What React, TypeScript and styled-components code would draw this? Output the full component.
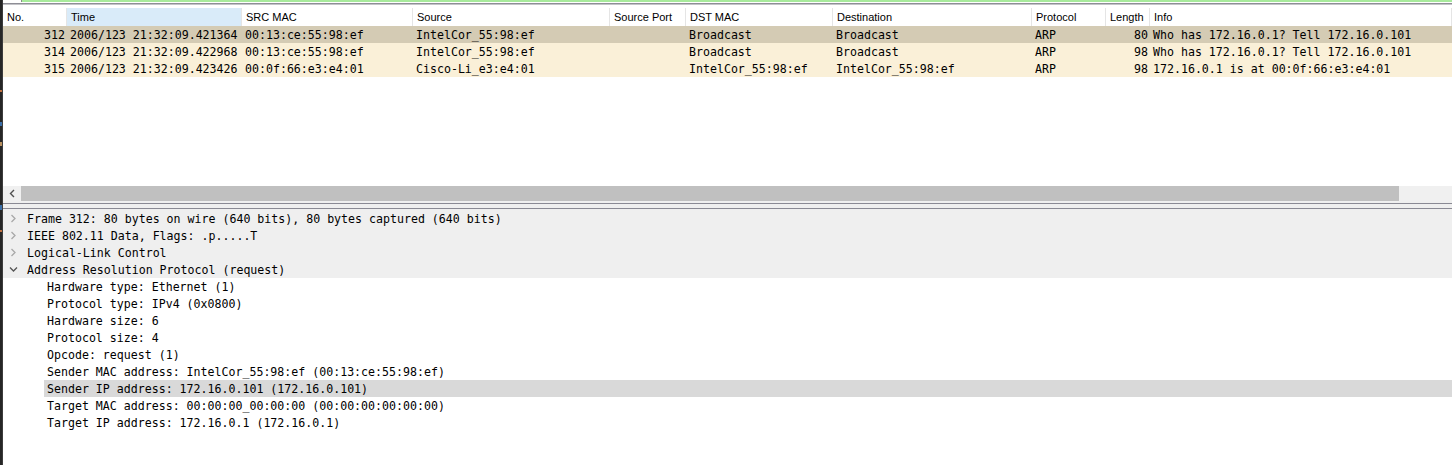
import React from "react";
import styled, { createGlobalStyle } from "styled-components";

const GlobalStyle = createGlobalStyle`
  html, body { margin: 0; padding: 0; background: #ffffff; }
  body { width: 1452px; height: 465px; overflow: hidden; }
  * { box-sizing: border-box; }
`;

const COLS = "64px 175px 171px 197px 76px 147px 199px 74px 44px 1fr";
const MONO = `"DejaVu Sans Mono", "Liberation Mono", monospace`;
const SANS = `"Liberation Sans", Arial, sans-serif`;

const Shell = styled.div`
  display: flex;
  width: 1452px;
  height: 465px;
  background: #ffffff;
`;

const LeftStrip = styled.div`
  width: 3px;
  flex: none;
  background: linear-gradient(
    to bottom,
    #262626 0px, #262626 90px,
    #c07040 90px, #c07040 92px,
    #262626 92px, #262626 122px,
    #3a6ea8 122px, #3a6ea8 126px,
    #262626 126px, #262626 142px,
    #b89060 142px, #b89060 146px,
    #262626 146px, #262626 205px,
    #3a6ea8 205px, #3a6ea8 210px,
    #262626 210px, #262626 230px,
    #c07040 230px, #c07040 232px,
    #262626 232px
  );
  border-right: 1px solid #3c3c3c;
`;

const Main = styled.div`
  flex: 1;
  display: flex;
  flex-direction: column;
  min-width: 0;
`;

const TopBar = styled.div`
  height: 8px;
  flex: none;
  display: flex;
  flex-direction: column;
`;

const GreenLine = styled.div`
  height: 2px;
  margin-left: 18px;
  background: #a8ea9c;
  border-left: 1px solid #8a8a8a;
`;

const GrayLine = styled.div<{ $c: string }>`
  height: 1px;
  background: ${(p) => p.$c};
`;

const PacketList = styled.div`
  height: 178px;
  flex: none;
  display: flex;
  flex-direction: column;
`;

const HeaderRow = styled.div`
  display: grid;
  grid-template-columns: ${COLS};
  height: 18px;
  font-family: ${SANS};
  font-size: 11px;
  color: #000;
`;

const HeaderCell = styled.div<{ $sorted?: boolean }>`
  display: flex;
  align-items: center;
  padding-left: 4px;
  background: ${(p) => (p.$sorted ? "#d9ebf9" : "#ffffff")};
  border-right: 1px solid #e5e5e5;
  white-space: nowrap;
  overflow: hidden;
`;

const PacketRow = styled.div<{ $bg: string }>`
  display: grid;
  grid-template-columns: ${COLS};
  height: 17px;
  background: ${(p) => p.$bg};
  font-family: ${MONO};
  font-size: 11.6px;
  color: #000;
`;

const Cell = styled.div<{ $right?: boolean }>`
  display: flex;
  align-items: center;
  justify-content: ${(p) => (p.$right ? "flex-end" : "flex-start")};
  padding: ${(p) => (p.$right ? "0 2px 0 0" : "0 0 0 3px")};
  white-space: pre;
  overflow: hidden;
`;

const ScrollBar = styled.div`
  height: 16px;
  flex: none;
  display: flex;
  background: #f0f0f0;
  padding-bottom: 1px;
`;

const ScrollButton = styled.div`
  width: 18px;
  flex: none;
  display: flex;
  align-items: center;
  justify-content: center;
`;

const ScrollThumb = styled.div`
  width: 1378px;
  flex: none;
  background: #c0c0c0;
`;

const Splitter = styled.div`
  height: 8px;
  flex: none;
  background: #efefef;
  display: flex;
  flex-direction: column;
  justify-content: space-between;
  padding: 1px 0 1px 0;
`;

const SplitLine = styled.div`
  height: 1px;
  background: #8a8a94;
`;

const Tree = styled.div`
  flex: 1;
  display: flex;
  flex-direction: column;
  background: #ffffff;
  font-family: ${MONO};
  font-size: 11.6px;
  color: #000;
`;

const TreeRow = styled.div<{ $top?: boolean; $selected?: boolean; $indent: number }>`
  height: 17px;
  display: flex;
  align-items: center;
  background: ${(p) => (p.$top ? "#efefef" : "#ffffff")};
  padding-left: ${(p) => p.$indent}px;
  white-space: pre;
`;

const Expander = styled.div`
  width: 20px;
  flex: none;
  display: flex;
  align-items: center;
  justify-content: center;
  padding-right: 2px;
`;

const TreeText = styled.div<{ $selected?: boolean }>`
  flex: 1;
  height: 100%;
  display: flex;
  align-items: center;
  padding-left: 3px;
  background: ${(p) => (p.$selected ? "#d9d9d9" : "transparent")};
`;

const Chevron = ({ open }: { open?: boolean }) =>
  open ? (
    <svg width="9" height="9" viewBox="0 0 9 9">
      <path d="M1 2.5 L4.5 6 L8 2.5" fill="none" stroke="#555" strokeWidth="1.3" />
    </svg>
  ) : (
    <svg width="9" height="9" viewBox="0 0 9 9">
      <path d="M2.5 1 L6 4.5 L2.5 8" fill="none" stroke="#a8a8a8" strokeWidth="1.3" />
    </svg>
  );

const LeftArrow = () => (
  <svg width="9" height="9" viewBox="0 0 9 9">
    <path d="M6 1 L2.5 4.5 L6 8" fill="none" stroke="#505050" strokeWidth="1.4" />
  </svg>
);

const headers = [
  "No.",
  "Time",
  "SRC MAC",
  "Source",
  "Source Port",
  "DST MAC",
  "Destination",
  "Protocol",
  "Length",
  "Info",
];

const packets = [
  {
    bg: "#d4cbb4",
    cells: ["312", "2006/123 21:32:09.421364", "00:13:ce:55:98:ef", "IntelCor_55:98:ef", "", "Broadcast", "Broadcast", "ARP", "80", "Who has 172.16.0.1? Tell 172.16.0.101"],
  },
  {
    bg: "#faf0d8",
    cells: ["314", "2006/123 21:32:09.422968", "00:13:ce:55:98:ef", "IntelCor_55:98:ef", "", "Broadcast", "Broadcast", "ARP", "98", "Who has 172.16.0.1? Tell 172.16.0.101"],
  },
  {
    bg: "#faf0d8",
    cells: ["315", "2006/123 21:32:09.423426", "00:0f:66:e3:e4:01", "Cisco-Li_e3:e4:01", "", "IntelCor_55:98:ef", "IntelCor_55:98:ef", "ARP", "98", "172.16.0.1 is at 00:0f:66:e3:e4:01"],
  },
];

const rightCols = new Set([0, 8]);

const topNodes = [
  { text: "Frame 312: 80 bytes on wire (640 bits), 80 bytes captured (640 bits)", open: false },
  { text: "IEEE 802.11 Data, Flags: .p.....T", open: false },
  { text: "Logical-Link Control", open: false },
  { text: "Address Resolution Protocol (request)", open: true },
];

const arpFields = [
  "Hardware type: Ethernet (1)",
  "Protocol type: IPv4 (0x0800)",
  "Hardware size: 6",
  "Protocol size: 4",
  "Opcode: request (1)",
  "Sender MAC address: IntelCor_55:98:ef (00:13:ce:55:98:ef)",
  "Sender IP address: 172.16.0.101 (172.16.0.101)",
  "Target MAC address: 00:00:00_00:00:00 (00:00:00:00:00:00)",
  "Target IP address: 172.16.0.1 (172.16.0.1)",
];

export default function App() {
  return (
    <>
      <GlobalStyle />
      <Shell>
        <LeftStrip />
        <Main>
          <TopBar>
            <GreenLine />
            <GrayLine $c="#ffffff" />
            <GrayLine $c="#8e8e96" />
            <GrayLine $c="#c4c4c8" />
          </TopBar>
          <PacketList>
            <HeaderRow>
              {headers.map((h) => (
                <HeaderCell key={h} $sorted={h === "Time"}>
                  {h}
                </HeaderCell>
              ))}
            </HeaderRow>
            {packets.map((p, i) => (
              <PacketRow key={i} $bg={p.bg}>
                {p.cells.map((c, j) => (
                  <Cell key={j} $right={rightCols.has(j)}>
                    {c}
                  </Cell>
                ))}
              </PacketRow>
            ))}
          </PacketList>
          <ScrollBar>
            <ScrollButton>
              <LeftArrow />
            </ScrollButton>
            <ScrollThumb />
          </ScrollBar>
          <Splitter>
            <SplitLine />
            <SplitLine />
          </Splitter>
          <Tree>
            {topNodes.map((n) => (
              <TreeRow key={n.text} $top $indent={1}>
                <Expander>
                  <Chevron open={n.open} />
                </Expander>
                <TreeText>{n.text}</TreeText>
              </TreeRow>
            ))}
            {arpFields.map((f) => {
              const sel = f.startsWith("Sender IP");
              return (
                <TreeRow key={f} $indent={41}>
                  <TreeText $selected={sel}>{f}</TreeText>
                </TreeRow>
              );
            })}
          </Tree>
        </Main>
      </Shell>
    </>
  );
}
